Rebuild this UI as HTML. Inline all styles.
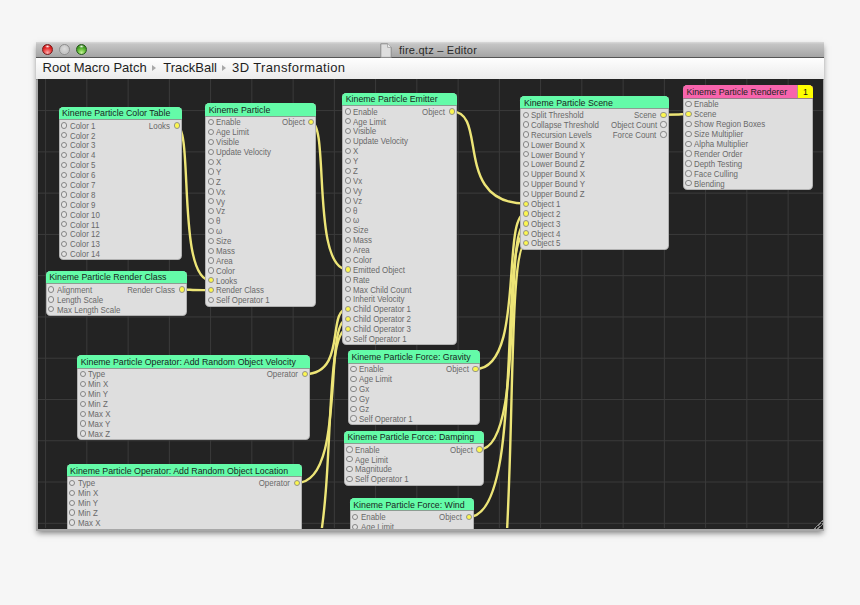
<!DOCTYPE html>
<html><head><meta charset="utf-8"><style>
html,body{margin:0;padding:0}
body{width:860px;height:605px;background:#f6f6f6;position:relative;overflow:hidden;font-family:"Liberation Sans",sans-serif}
#win{position:absolute;left:36.2px;top:42px;width:787.5px;height:488.5px;background:#a8a8a8;box-shadow:0 3px 6px -1px rgba(0,0,0,.5)}
#title{position:absolute;left:0;top:0;width:787.5px;height:15px;background:linear-gradient(#d9d9d9,#c4c4c4 15%,#a4a4a4);border-bottom:1px solid #555}
#crumb{position:absolute;left:0;top:16px;width:787.5px;height:21px;background:linear-gradient(#fefefe,#ebebeb);border-bottom:1px solid #888}
#canvas{position:absolute;left:1.8px;top:37px;width:785px;height:449.5px;background:#232323;overflow:hidden}
.tl{position:absolute;top:2.2px;width:9px;height:9px;border-radius:50%;border:0.8px solid #777;box-sizing:content-box}
#doc{position:absolute;left:344.1px;top:0.8px;width:12px;height:15px}
#ttl{position:absolute;left:362.7px;top:1.5px;font-size:11px;line-height:13px;letter-spacing:0.25px;color:#2a2a2a;white-space:nowrap}
#crumb span{position:absolute;top:2.2px;font-size:13px;line-height:15px;color:#1e1e1e;white-space:nowrap}
#grip{position:absolute;z-index:5;right:1px;bottom:2px;width:10px;height:10px;background:linear-gradient(135deg,transparent 0,transparent 52%,#8a8a8a 52%,#8a8a8a 60%,transparent 60%,transparent 70%,#8a8a8a 70%,#8a8a8a 78%,transparent 78%)}
#crumb i{position:absolute;top:6.5px;width:0;height:0;border-left:4.5px solid #a8a8a8;border-top:3.3px solid transparent;border-bottom:3.3px solid transparent}
.n{position:absolute;border-radius:4.5px;background:#dedede;box-shadow:inset 0 0 0 1px rgba(0,0,0,.2);overflow:hidden}
.h{position:absolute;left:0;top:0;right:0;height:12.4px;background:#64fba8;border-bottom:1px solid #8c9c92}
.bd{position:absolute;right:0;top:0;width:16px;height:12.4px;background:#ffff00;border-left:1px solid #b0a080;font-size:8.8px;line-height:10px;color:#111;text-align:center;padding-top:1.9px;box-sizing:border-box}
.h.p{background:#f864ad;border-bottom-color:#9a7c8c}
.ht{position:absolute;left:3.4px;top:1.9px;font-size:8.8px;line-height:10px;color:#18261e;white-space:nowrap}
.r{position:absolute;font-size:8.6px;line-height:10px;transform:scaleX(0.92);transform-origin:0 0;color:#696969;white-space:nowrap}
.pt{position:absolute;width:4.3px;height:4.3px;border-radius:50%;border:0.85px solid #858585;background:#e4e4e4}
.pt.f{background:#fcf650;border-color:#94948a}
</style></head><body>
<div id="win">
<div id="title">
<div class="tl" style="left:6.0px;background:radial-gradient(ellipse 30% 18% at 50% 16%,rgba(255,255,255,.95),rgba(255,255,255,0)),radial-gradient(circle at 50% 85%,#f8b0b0 0,#f06060 30%,#e02424 60%,#c01010 100%);border-color:#7a1a1a"></div>
<div class="tl" style="left:23.0px;background:radial-gradient(circle at 50% 40%,#dcdcdc 0,#c6c6c6 60%,#d8d8d8 95%);border-color:#8e8e8e"></div>
<div class="tl" style="left:40.3px;background:radial-gradient(ellipse 30% 18% at 50% 16%,rgba(255,255,255,.9),rgba(255,255,255,0)),radial-gradient(circle at 50% 85%,#c8f0a0 0,#80d050 30%,#48a428 60%,#2e7a18 100%);border-color:#24561a"></div>
<svg id="doc" width="12" height="15" viewBox="0 0 12 15"><path d="M0.8,0.8 H7.6 L11.2,4.4 V14.4 H0.8 Z" fill="#dedede" stroke="#8c8c8c" stroke-width="1"/><path d="M7.6,0.8 V4.4 H11.2" fill="#f2f2f2" stroke="#9a9a9a" stroke-width="0.8"/></svg>
<div id="ttl">fire.qtz &ndash; Editor</div>
</div>
<div id="crumb"><span style="left:6.4px">Root Macro Patch</span><i style="left:116.3px"></i><span style="left:127.1px">TrackBall</span><i style="left:185.8px"></i><span style="left:195.9px;letter-spacing:0.38px">3D Transformation</span></div>
<div id="grip"></div>
<div id="canvas">

<svg width="785" height="449" style="position:absolute;left:0;top:0">
<line x1="7.60" y1="0" x2="7.60" y2="449" stroke="#3b3b3b" stroke-width="1"/>
<line x1="48.85" y1="0" x2="48.85" y2="449" stroke="#3b3b3b" stroke-width="1"/>
<line x1="90.10" y1="0" x2="90.10" y2="449" stroke="#3b3b3b" stroke-width="1"/>
<line x1="131.35" y1="0" x2="131.35" y2="449" stroke="#3b3b3b" stroke-width="1"/>
<line x1="172.60" y1="0" x2="172.60" y2="449" stroke="#3b3b3b" stroke-width="1"/>
<line x1="213.85" y1="0" x2="213.85" y2="449" stroke="#3b3b3b" stroke-width="1"/>
<line x1="255.10" y1="0" x2="255.10" y2="449" stroke="#3b3b3b" stroke-width="1"/>
<line x1="296.35" y1="0" x2="296.35" y2="449" stroke="#3b3b3b" stroke-width="1"/>
<line x1="337.60" y1="0" x2="337.60" y2="449" stroke="#3b3b3b" stroke-width="1"/>
<line x1="378.85" y1="0" x2="378.85" y2="449" stroke="#3b3b3b" stroke-width="1"/>
<line x1="420.10" y1="0" x2="420.10" y2="449" stroke="#3b3b3b" stroke-width="1"/>
<line x1="461.35" y1="0" x2="461.35" y2="449" stroke="#3b3b3b" stroke-width="1"/>
<line x1="502.60" y1="0" x2="502.60" y2="449" stroke="#3b3b3b" stroke-width="1"/>
<line x1="543.85" y1="0" x2="543.85" y2="449" stroke="#3b3b3b" stroke-width="1"/>
<line x1="585.10" y1="0" x2="585.10" y2="449" stroke="#3b3b3b" stroke-width="1"/>
<line x1="626.35" y1="0" x2="626.35" y2="449" stroke="#3b3b3b" stroke-width="1"/>
<line x1="667.60" y1="0" x2="667.60" y2="449" stroke="#3b3b3b" stroke-width="1"/>
<line x1="708.85" y1="0" x2="708.85" y2="449" stroke="#3b3b3b" stroke-width="1"/>
<line x1="750.10" y1="0" x2="750.10" y2="449" stroke="#3b3b3b" stroke-width="1"/>
<line x1="0" y1="31.60" x2="785" y2="31.60" stroke="#3b3b3b" stroke-width="1"/>
<line x1="0" y1="72.87" x2="785" y2="72.87" stroke="#3b3b3b" stroke-width="1"/>
<line x1="0" y1="114.14" x2="785" y2="114.14" stroke="#3b3b3b" stroke-width="1"/>
<line x1="0" y1="155.41" x2="785" y2="155.41" stroke="#3b3b3b" stroke-width="1"/>
<line x1="0" y1="196.68" x2="785" y2="196.68" stroke="#3b3b3b" stroke-width="1"/>
<line x1="0" y1="237.95" x2="785" y2="237.95" stroke="#3b3b3b" stroke-width="1"/>
<line x1="0" y1="279.22" x2="785" y2="279.22" stroke="#3b3b3b" stroke-width="1"/>
<line x1="0" y1="320.49" x2="785" y2="320.49" stroke="#3b3b3b" stroke-width="1"/>
<line x1="0" y1="361.76" x2="785" y2="361.76" stroke="#3b3b3b" stroke-width="1"/>
<line x1="0" y1="403.03" x2="785" y2="403.03" stroke="#3b3b3b" stroke-width="1"/>
<line x1="0" y1="444.30" x2="785" y2="444.30" stroke="#3b3b3b" stroke-width="1"/>
</svg>
<svg width="785" height="449" style="position:absolute;left:0;top:0">
<path d="M138.60,46.40 C155.65,46.40 138.60,201.28 172.70,201.28" fill="none" stroke="#ede577" stroke-width="2.4"/>
<path d="M143.80,210.50 C158.25,210.50 143.80,211.16 172.70,211.16" fill="none" stroke="#ede577" stroke-width="2.4"/>
<path d="M273.20,43.20 C291.45,43.20 273.20,190.48 309.70,190.48" fill="none" stroke="#ede577" stroke-width="2.4"/>
<path d="M413.80,32.40 C450.85,32.40 413.80,124.62 487.90,124.62" fill="none" stroke="#ede577" stroke-width="2.4"/>
<path d="M309.70,230.00 C288.15,230.00 309.70,295.10 266.60,295.10" fill="none" stroke="#ede577" stroke-width="2.4"/>
<path d="M309.70,239.88 C284.15,239.88 309.70,403.90 258.60,403.90" fill="none" stroke="#ede577" stroke-width="2.4"/>
<path d="M309.70,249.76 C277.35,249.76 309.70,524.40 245.00,524.40" fill="none" stroke="#ede577" stroke-width="2.4"/>
<path d="M487.90,134.50 C462.60,134.50 487.90,290.10 437.30,290.10" fill="none" stroke="#ede577" stroke-width="2.4"/>
<path d="M487.90,144.38 C464.60,144.38 487.90,370.40 441.30,370.40" fill="none" stroke="#ede577" stroke-width="2.4"/>
<path d="M487.90,154.26 C459.40,154.26 487.90,437.80 430.90,437.80" fill="none" stroke="#ede577" stroke-width="2.4"/>
<path d="M487.90,164.14 C462.25,164.14 487.90,601.00 436.60,601.00" fill="none" stroke="#ede577" stroke-width="2.4"/>
<path d="M650.40,35.08 C637.95,35.08 650.40,35.70 625.50,35.70" fill="none" stroke="#ede577" stroke-width="2.4"/>
</svg>
<div class="n" style="left:20.60px;top:27.50px;width:123.20px;height:153.92px">
<div class="h"><div class="ht">Kineme Particle Color Table</div></div>
<div class="pt" style="left:2.40px;top:15.80px"></div>
<div class="r" style="left:11px;top:14.20px">Color 1</div>
<div class="pt" style="left:2.40px;top:25.68px"></div>
<div class="r" style="left:11px;top:24.08px">Color 2</div>
<div class="pt" style="left:2.40px;top:35.56px"></div>
<div class="r" style="left:11px;top:33.96px">Color 3</div>
<div class="pt" style="left:2.40px;top:45.44px"></div>
<div class="r" style="left:11px;top:43.84px">Color 4</div>
<div class="pt" style="left:2.40px;top:55.32px"></div>
<div class="r" style="left:11px;top:53.72px">Color 5</div>
<div class="pt" style="left:2.40px;top:65.20px"></div>
<div class="r" style="left:11px;top:63.60px">Color 6</div>
<div class="pt" style="left:2.40px;top:75.08px"></div>
<div class="r" style="left:11px;top:73.48px">Color 7</div>
<div class="pt" style="left:2.40px;top:84.96px"></div>
<div class="r" style="left:11px;top:83.36px">Color 8</div>
<div class="pt" style="left:2.40px;top:94.84px"></div>
<div class="r" style="left:11px;top:93.24px">Color 9</div>
<div class="pt" style="left:2.40px;top:104.72px"></div>
<div class="r" style="left:11px;top:103.12px">Color 10</div>
<div class="pt" style="left:2.40px;top:114.60px"></div>
<div class="r" style="left:11px;top:113.00px">Color 11</div>
<div class="pt" style="left:2.40px;top:124.48px"></div>
<div class="r" style="left:11px;top:122.88px">Color 12</div>
<div class="pt" style="left:2.40px;top:134.36px"></div>
<div class="r" style="left:11px;top:132.76px">Color 13</div>
<div class="pt" style="left:2.40px;top:144.24px"></div>
<div class="r" style="left:11px;top:142.64px">Color 14</div>
<div class="pt f" style="left:115.00px;top:15.80px"></div>
<div class="r" style="right:12px;top:14.20px;transform-origin:100% 0">Looks</div>
</div>
<div class="n" style="left:7.80px;top:191.60px;width:141.20px;height:45.24px">
<div class="h"><div class="ht">Kineme Particle Render Class</div></div>
<div class="pt" style="left:2.40px;top:15.80px"></div>
<div class="r" style="left:11px;top:14.20px">Alignment</div>
<div class="pt" style="left:2.40px;top:25.68px"></div>
<div class="r" style="left:11px;top:24.08px">Length Scale</div>
<div class="pt" style="left:2.40px;top:35.56px"></div>
<div class="r" style="left:11px;top:33.96px">Max Length Scale</div>
<div class="pt f" style="left:133.00px;top:15.80px"></div>
<div class="r" style="right:12px;top:14.20px;transform-origin:100% 0">Render Class</div>
</div>
<div class="n" style="left:167.30px;top:24.30px;width:111.10px;height:203.32px">
<div class="h"><div class="ht">Kineme Particle</div></div>
<div class="pt" style="left:2.40px;top:15.80px"></div>
<div class="r" style="left:11px;top:14.20px">Enable</div>
<div class="pt" style="left:2.40px;top:25.68px"></div>
<div class="r" style="left:11px;top:24.08px">Age Limit</div>
<div class="pt" style="left:2.40px;top:35.56px"></div>
<div class="r" style="left:11px;top:33.96px">Visible</div>
<div class="pt" style="left:2.40px;top:45.44px"></div>
<div class="r" style="left:11px;top:43.84px">Update Velocity</div>
<div class="pt" style="left:2.40px;top:55.32px"></div>
<div class="r" style="left:11px;top:53.72px">X</div>
<div class="pt" style="left:2.40px;top:65.20px"></div>
<div class="r" style="left:11px;top:63.60px">Y</div>
<div class="pt" style="left:2.40px;top:75.08px"></div>
<div class="r" style="left:11px;top:73.48px">Z</div>
<div class="pt" style="left:2.40px;top:84.96px"></div>
<div class="r" style="left:11px;top:83.36px">Vx</div>
<div class="pt" style="left:2.40px;top:94.84px"></div>
<div class="r" style="left:11px;top:93.24px">Vy</div>
<div class="pt" style="left:2.40px;top:104.72px"></div>
<div class="r" style="left:11px;top:103.12px">Vz</div>
<div class="pt" style="left:2.40px;top:114.60px"></div>
<div class="r" style="left:11px;top:113.00px">θ</div>
<div class="pt" style="left:2.40px;top:124.48px"></div>
<div class="r" style="left:11px;top:122.88px">ω</div>
<div class="pt" style="left:2.40px;top:134.36px"></div>
<div class="r" style="left:11px;top:132.76px">Size</div>
<div class="pt" style="left:2.40px;top:144.24px"></div>
<div class="r" style="left:11px;top:142.64px">Mass</div>
<div class="pt" style="left:2.40px;top:154.12px"></div>
<div class="r" style="left:11px;top:152.52px">Area</div>
<div class="pt" style="left:2.40px;top:164.00px"></div>
<div class="r" style="left:11px;top:162.40px">Color</div>
<div class="pt f" style="left:2.40px;top:173.88px"></div>
<div class="r" style="left:11px;top:172.28px">Looks</div>
<div class="pt f" style="left:2.40px;top:183.76px"></div>
<div class="r" style="left:11px;top:182.16px">Render Class</div>
<div class="pt" style="left:2.40px;top:193.64px"></div>
<div class="r" style="left:11px;top:192.04px">Self Operator 1</div>
<div class="pt f" style="left:102.90px;top:15.80px"></div>
<div class="r" style="right:12px;top:14.20px;transform-origin:100% 0">Object</div>
</div>
<div class="n" style="left:304.30px;top:13.50px;width:114.70px;height:252.72px">
<div class="h"><div class="ht">Kineme Particle Emitter</div></div>
<div class="pt" style="left:2.40px;top:15.80px"></div>
<div class="r" style="left:11px;top:14.20px">Enable</div>
<div class="pt" style="left:2.40px;top:25.68px"></div>
<div class="r" style="left:11px;top:24.08px">Age Limit</div>
<div class="pt" style="left:2.40px;top:35.56px"></div>
<div class="r" style="left:11px;top:33.96px">Visible</div>
<div class="pt" style="left:2.40px;top:45.44px"></div>
<div class="r" style="left:11px;top:43.84px">Update Velocity</div>
<div class="pt" style="left:2.40px;top:55.32px"></div>
<div class="r" style="left:11px;top:53.72px">X</div>
<div class="pt" style="left:2.40px;top:65.20px"></div>
<div class="r" style="left:11px;top:63.60px">Y</div>
<div class="pt" style="left:2.40px;top:75.08px"></div>
<div class="r" style="left:11px;top:73.48px">Z</div>
<div class="pt" style="left:2.40px;top:84.96px"></div>
<div class="r" style="left:11px;top:83.36px">Vx</div>
<div class="pt" style="left:2.40px;top:94.84px"></div>
<div class="r" style="left:11px;top:93.24px">Vy</div>
<div class="pt" style="left:2.40px;top:104.72px"></div>
<div class="r" style="left:11px;top:103.12px">Vz</div>
<div class="pt" style="left:2.40px;top:114.60px"></div>
<div class="r" style="left:11px;top:113.00px">θ</div>
<div class="pt" style="left:2.40px;top:124.48px"></div>
<div class="r" style="left:11px;top:122.88px">ω</div>
<div class="pt" style="left:2.40px;top:134.36px"></div>
<div class="r" style="left:11px;top:132.76px">Size</div>
<div class="pt" style="left:2.40px;top:144.24px"></div>
<div class="r" style="left:11px;top:142.64px">Mass</div>
<div class="pt" style="left:2.40px;top:154.12px"></div>
<div class="r" style="left:11px;top:152.52px">Area</div>
<div class="pt" style="left:2.40px;top:164.00px"></div>
<div class="r" style="left:11px;top:162.40px">Color</div>
<div class="pt f" style="left:2.40px;top:173.88px"></div>
<div class="r" style="left:11px;top:172.28px">Emitted Object</div>
<div class="pt" style="left:2.40px;top:183.76px"></div>
<div class="r" style="left:11px;top:182.16px">Rate</div>
<div class="pt" style="left:2.40px;top:193.64px"></div>
<div class="r" style="left:11px;top:192.04px">Max Child Count</div>
<div class="pt" style="left:2.40px;top:203.52px"></div>
<div class="r" style="left:11px;top:201.92px">Inherit Velocity</div>
<div class="pt f" style="left:2.40px;top:213.40px"></div>
<div class="r" style="left:11px;top:211.80px">Child Operator 1</div>
<div class="pt f" style="left:2.40px;top:223.28px"></div>
<div class="r" style="left:11px;top:221.68px">Child Operator 2</div>
<div class="pt f" style="left:2.40px;top:233.16px"></div>
<div class="r" style="left:11px;top:231.56px">Child Operator 3</div>
<div class="pt" style="left:2.40px;top:243.04px"></div>
<div class="r" style="left:11px;top:241.44px">Self Operator 1</div>
<div class="pt f" style="left:106.50px;top:15.80px"></div>
<div class="r" style="right:12px;top:14.20px;transform-origin:100% 0">Object</div>
</div>
<div class="n" style="left:482.50px;top:16.80px;width:148.20px;height:153.92px">
<div class="h"><div class="ht">Kineme Particle Scene</div></div>
<div class="pt" style="left:2.40px;top:15.80px"></div>
<div class="r" style="left:11px;top:14.20px">Split Threshold</div>
<div class="pt" style="left:2.40px;top:25.68px"></div>
<div class="r" style="left:11px;top:24.08px">Collapse Threshold</div>
<div class="pt" style="left:2.40px;top:35.56px"></div>
<div class="r" style="left:11px;top:33.96px">Recursion Levels</div>
<div class="pt" style="left:2.40px;top:45.44px"></div>
<div class="r" style="left:11px;top:43.84px">Lower Bound X</div>
<div class="pt" style="left:2.40px;top:55.32px"></div>
<div class="r" style="left:11px;top:53.72px">Lower Bound Y</div>
<div class="pt" style="left:2.40px;top:65.20px"></div>
<div class="r" style="left:11px;top:63.60px">Lower Bound Z</div>
<div class="pt" style="left:2.40px;top:75.08px"></div>
<div class="r" style="left:11px;top:73.48px">Upper Bound X</div>
<div class="pt" style="left:2.40px;top:84.96px"></div>
<div class="r" style="left:11px;top:83.36px">Upper Bound Y</div>
<div class="pt" style="left:2.40px;top:94.84px"></div>
<div class="r" style="left:11px;top:93.24px">Upper Bound Z</div>
<div class="pt f" style="left:2.40px;top:104.72px"></div>
<div class="r" style="left:11px;top:103.12px">Object 1</div>
<div class="pt f" style="left:2.40px;top:114.60px"></div>
<div class="r" style="left:11px;top:113.00px">Object 2</div>
<div class="pt f" style="left:2.40px;top:124.48px"></div>
<div class="r" style="left:11px;top:122.88px">Object 3</div>
<div class="pt f" style="left:2.40px;top:134.36px"></div>
<div class="r" style="left:11px;top:132.76px">Object 4</div>
<div class="pt f" style="left:2.40px;top:144.24px"></div>
<div class="r" style="left:11px;top:142.64px">Object 5</div>
<div class="pt f" style="left:140.00px;top:15.80px"></div>
<div class="r" style="right:12px;top:14.20px;transform-origin:100% 0">Scene</div>
<div class="pt" style="left:140.00px;top:25.68px"></div>
<div class="r" style="right:12px;top:24.08px;transform-origin:100% 0">Object Count</div>
<div class="pt" style="left:140.00px;top:35.56px"></div>
<div class="r" style="right:12px;top:33.96px;transform-origin:100% 0">Force Count</div>
</div>
<div class="n" style="left:645.00px;top:6.30px;width:130.00px;height:104.52px">
<div class="h p"><div class="ht">Kineme Particle Renderer</div><div class="bd">1</div></div>
<div class="pt" style="left:2.40px;top:15.80px"></div>
<div class="r" style="left:11px;top:14.20px">Enable</div>
<div class="pt f" style="left:2.40px;top:25.68px"></div>
<div class="r" style="left:11px;top:24.08px">Scene</div>
<div class="pt" style="left:2.40px;top:35.56px"></div>
<div class="r" style="left:11px;top:33.96px">Show Region Boxes</div>
<div class="pt" style="left:2.40px;top:45.44px"></div>
<div class="r" style="left:11px;top:43.84px">Size Multiplier</div>
<div class="pt" style="left:2.40px;top:55.32px"></div>
<div class="r" style="left:11px;top:53.72px">Alpha Multiplier</div>
<div class="pt" style="left:2.40px;top:65.20px"></div>
<div class="r" style="left:11px;top:63.60px">Render Order</div>
<div class="pt" style="left:2.40px;top:75.08px"></div>
<div class="r" style="left:11px;top:73.48px">Depth Testing</div>
<div class="pt" style="left:2.40px;top:84.96px"></div>
<div class="r" style="left:11px;top:83.36px">Face Culling</div>
<div class="pt" style="left:2.40px;top:94.84px"></div>
<div class="r" style="left:11px;top:93.24px">Blending</div>
</div>
<div class="n" style="left:39.30px;top:276.20px;width:232.50px;height:84.76px">
<div class="h"><div class="ht">Kineme Particle Operator: Add Random Object Velocity</div></div>
<div class="pt" style="left:2.40px;top:15.80px"></div>
<div class="r" style="left:11px;top:14.20px">Type</div>
<div class="pt" style="left:2.40px;top:25.68px"></div>
<div class="r" style="left:11px;top:24.08px">Min X</div>
<div class="pt" style="left:2.40px;top:35.56px"></div>
<div class="r" style="left:11px;top:33.96px">Min Y</div>
<div class="pt" style="left:2.40px;top:45.44px"></div>
<div class="r" style="left:11px;top:43.84px">Min Z</div>
<div class="pt" style="left:2.40px;top:55.32px"></div>
<div class="r" style="left:11px;top:53.72px">Max X</div>
<div class="pt" style="left:2.40px;top:65.20px"></div>
<div class="r" style="left:11px;top:63.60px">Max Y</div>
<div class="pt" style="left:2.40px;top:75.08px"></div>
<div class="r" style="left:11px;top:73.48px">Max Z</div>
<div class="pt f" style="left:224.30px;top:15.80px"></div>
<div class="r" style="right:12px;top:14.20px;transform-origin:100% 0">Operator</div>
</div>
<div class="n" style="left:28.70px;top:385.00px;width:235.10px;height:84.76px">
<div class="h"><div class="ht">Kineme Particle Operator: Add Random Object Location</div></div>
<div class="pt" style="left:2.40px;top:15.80px"></div>
<div class="r" style="left:11px;top:14.20px">Type</div>
<div class="pt" style="left:2.40px;top:25.68px"></div>
<div class="r" style="left:11px;top:24.08px">Min X</div>
<div class="pt" style="left:2.40px;top:35.56px"></div>
<div class="r" style="left:11px;top:33.96px">Min Y</div>
<div class="pt" style="left:2.40px;top:45.44px"></div>
<div class="r" style="left:11px;top:43.84px">Min Z</div>
<div class="pt" style="left:2.40px;top:55.32px"></div>
<div class="r" style="left:11px;top:53.72px">Max X</div>
<div class="pt" style="left:2.40px;top:65.20px"></div>
<div class="r" style="left:11px;top:63.60px">Max Y</div>
<div class="pt" style="left:2.40px;top:75.08px"></div>
<div class="r" style="left:11px;top:73.48px">Max Z</div>
<div class="pt f" style="left:226.90px;top:15.80px"></div>
<div class="r" style="right:12px;top:14.20px;transform-origin:100% 0">Operator</div>
</div>
<div class="n" style="left:310.00px;top:271.20px;width:132.50px;height:74.88px">
<div class="h"><div class="ht">Kineme Particle Force: Gravity</div></div>
<div class="pt" style="left:2.40px;top:15.80px"></div>
<div class="r" style="left:11px;top:14.20px">Enable</div>
<div class="pt" style="left:2.40px;top:25.68px"></div>
<div class="r" style="left:11px;top:24.08px">Age Limit</div>
<div class="pt" style="left:2.40px;top:35.56px"></div>
<div class="r" style="left:11px;top:33.96px">Gx</div>
<div class="pt" style="left:2.40px;top:45.44px"></div>
<div class="r" style="left:11px;top:43.84px">Gy</div>
<div class="pt" style="left:2.40px;top:55.32px"></div>
<div class="r" style="left:11px;top:53.72px">Gz</div>
<div class="pt" style="left:2.40px;top:65.20px"></div>
<div class="r" style="left:11px;top:63.60px">Self Operator 1</div>
<div class="pt f" style="left:124.30px;top:15.80px"></div>
<div class="r" style="right:12px;top:14.20px;transform-origin:100% 0">Object</div>
</div>
<div class="n" style="left:306.10px;top:351.50px;width:140.40px;height:55.12px">
<div class="h"><div class="ht">Kineme Particle Force: Damping</div></div>
<div class="pt" style="left:2.40px;top:15.80px"></div>
<div class="r" style="left:11px;top:14.20px">Enable</div>
<div class="pt" style="left:2.40px;top:25.68px"></div>
<div class="r" style="left:11px;top:24.08px">Age Limit</div>
<div class="pt" style="left:2.40px;top:35.56px"></div>
<div class="r" style="left:11px;top:33.96px">Magnitude</div>
<div class="pt" style="left:2.40px;top:45.44px"></div>
<div class="r" style="left:11px;top:43.84px">Self Operator 1</div>
<div class="pt f" style="left:132.20px;top:15.80px"></div>
<div class="r" style="right:12px;top:14.20px;transform-origin:100% 0">Object</div>
</div>
<div class="n" style="left:311.80px;top:418.90px;width:124.30px;height:74.88px">
<div class="h"><div class="ht">Kineme Particle Force: Wind</div></div>
<div class="pt" style="left:2.40px;top:15.80px"></div>
<div class="r" style="left:11px;top:14.20px">Enable</div>
<div class="pt" style="left:2.40px;top:25.68px"></div>
<div class="r" style="left:11px;top:24.08px">Age Limit</div>
<div class="pt" style="left:2.40px;top:35.56px"></div>
<div class="r" style="left:11px;top:33.96px">Wx</div>
<div class="pt" style="left:2.40px;top:45.44px"></div>
<div class="r" style="left:11px;top:43.84px">Wy</div>
<div class="pt" style="left:2.40px;top:55.32px"></div>
<div class="r" style="left:11px;top:53.72px">Wz</div>
<div class="pt" style="left:2.40px;top:65.20px"></div>
<div class="r" style="left:11px;top:63.60px">Self Operator 1</div>
<div class="pt f" style="left:116.10px;top:15.80px"></div>
<div class="r" style="right:12px;top:14.20px;transform-origin:100% 0">Object</div>
</div>
</div></div></body></html>
